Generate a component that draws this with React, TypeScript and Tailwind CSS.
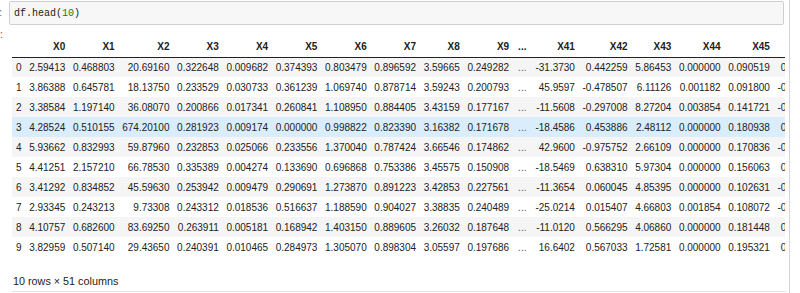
import React from "react";

const cols = ["X0","X1","X2","X3","X4","X5","X6","X7","X8","X9","...","X41","X42","X43","X44","X45","X46"];
const rows: string[][] = [
  ["2.59413","0.468803","20.69160","0.322648","0.009682","0.374393","0.803479","0.896592","3.59665","0.249282","...","-31.3730","0.442259","5.86453","0.000000","0.090519","0.012345"],
  ["3.86388","0.645781","18.13750","0.233529","0.030733","0.361239","1.069740","0.878714","3.59243","0.200793","...","45.9597","-0.478507","6.11126","0.001182","0.091800","-0.012345"],
  ["3.38584","1.197140","36.08070","0.200866","0.017341","0.260841","1.108950","0.884405","3.43159","0.177167","...","-11.5608","-0.297008","8.27204","0.003854","0.141721","-0.023456"],
  ["4.28524","0.510155","674.20100","0.281923","0.009174","0.000000","0.998822","0.823390","3.16382","0.171678","...","-18.4586","0.453886","2.48112","0.000000","0.180938","0.034567"],
  ["5.93662","0.832993","59.87960","0.232853","0.025066","0.233556","1.370040","0.787424","3.66546","0.174862","...","42.9600","-0.975752","2.66109","0.000000","0.170836","-0.045678"],
  ["4.41251","2.157210","66.78530","0.335389","0.004274","0.133690","0.696868","0.753386","3.45575","0.150908","...","-18.5469","0.638310","5.97304","0.000000","0.156063","0.056789"],
  ["3.41292","0.834852","45.59630","0.253942","0.009479","0.290691","1.273870","0.891223","3.42853","0.227561","...","-11.3654","0.060045","4.85395","0.000000","0.102631","-0.067891"],
  ["2.93345","0.243213","9.73308","0.243312","0.018536","0.516637","1.188590","0.904027","3.38835","0.240489","...","-25.0214","0.015407","4.66803","0.001854","0.108072","-0.078912"],
  ["4.10757","0.682600","83.69250","0.263911","0.005181","0.168942","1.403150","0.889605","3.26032","0.187648","...","-11.0120","0.566295","4.06860","0.000000","0.181448","0.089012"],
  ["3.82959","0.507140","29.43650","0.240391","0.010465","0.284973","1.305070","0.898304","3.05597","0.197686","...","16.6402","0.567033","1.72581","0.000000","0.195321","0.090123"],
];

export default function App() {
  return (
    <div className="w-[800px] h-[293px] bg-white overflow-hidden flex" style={{ fontFamily: '"Liberation Sans", Arial, sans-serif' }}>
      <div className="w-[790px] h-full border-r border-[#d4d4d4] flex flex-col relative">
        {/* input row */}
        <div className="flex h-[26px] pt-[1px]">
          <div className="w-[10px] shrink-0 text-[11px] leading-[22px] text-[#5866a8] -ml-[1px]">:</div>
          <div className="w-[775px] h-[24px] border border-[#cfcfcf] bg-[#f7f7f7] rounded-[2px] flex items-center pl-[4px]">
            <span className="text-[10px] text-[#222]" style={{ fontFamily: '"Liberation Mono", "DejaVu Sans Mono", monospace' }}>
              df.head(<span className="text-[#008800]">10</span>)
            </span>
          </div>
        </div>
        {/* output row */}
        <div className="flex flex-1 min-h-0">
          <div className="w-[12px] shrink-0 relative">
            <div className="absolute left-0 top-[1px] text-[11px] leading-[14px] text-[#d84315] overflow-hidden h-[12px]">:</div>
          </div>
          <div className="flex-1 min-w-0 flex flex-col">
            <div className="w-[773px] overflow-hidden pt-[11px]">
              <table className="border-collapse whitespace-nowrap text-[10px] text-[#222]">
                <thead>
                  <tr className="h-[20px] border-b border-[#222]">
                    <th className="px-[3.8px]"></th>
                    {cols.map((c) => (
                      <th key={c} className={"text-right font-bold " + (c === "..." ? "px-[5.2px]" : "px-[3.8px]")}>{c}</th>
                    ))}
                  </tr>
                </thead>
                <tbody>
                  {rows.map((r, i) => (
                    <tr
                      key={i}
                      className={
                        "h-[20px] " + (i === 3 ? "bg-[#daedfc]" : i % 2 === 0 ? "bg-[#f5f5f5]" : "bg-white")
                      }
                    >
                      <th className="pl-[4px] pr-[3.8px] text-left font-normal">{i}</th>
                      {r.map((v, j) => (
                        <td key={j} className={"text-right " + (v === "..." ? "px-[5.2px] text-[#555]" : "px-[3.8px]")}>{v}</td>
                      ))}
                    </tr>
                  ))}
                </tbody>
              </table>
            </div>
            <div className="mt-[17px] text-[10.8px] text-[#222] pl-[1px] leading-[14px]">10 rows × 51 columns</div>
          </div>
        </div>
        <div className="absolute left-[12px] right-[2px] bottom-[1px] h-px bg-[#e4e4e4]"></div>
      </div>
    </div>
  );
}
